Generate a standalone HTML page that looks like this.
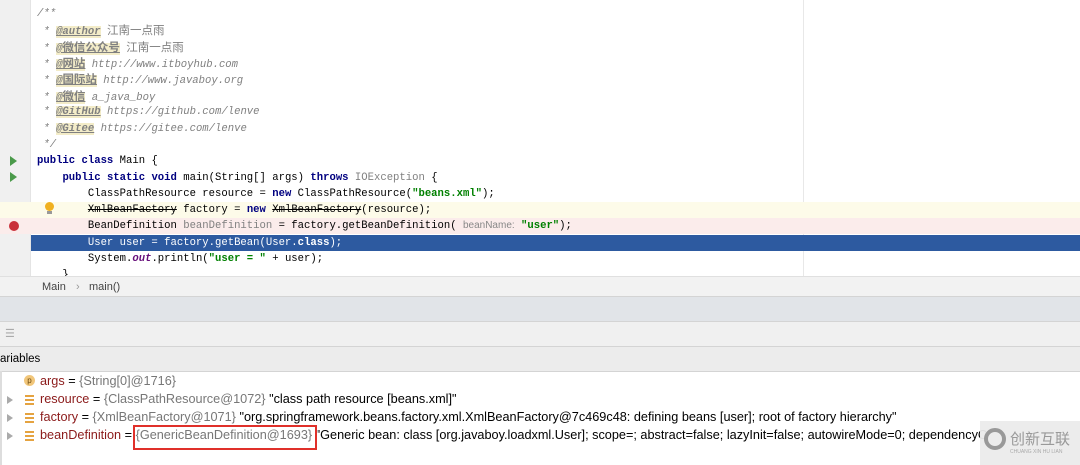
<!DOCTYPE html><html><head><meta charset="utf-8"><style>
body{margin:0;width:1080px;height:465px;overflow:hidden;background:#fff;position:relative;font-family:"Liberation Sans","Noto Sans CJK SC",sans-serif}
.code{position:absolute;left:0;top:0;width:1080px;height:276px;background:#fff;overflow:hidden}
.gut{position:absolute;left:0;top:0;width:30px;height:276px;background:#f0f0f0;border-right:1px solid #e4e4e4}
.ln{position:absolute;left:0;width:1080px;height:16.4px;font-family:"Liberation Mono","Noto Sans CJK SC",monospace;font-size:10.6px;line-height:16.4px;white-space:pre;color:#000}
.ln span.t{position:absolute;left:37px}
.c{color:#808080;font-style:italic}.tag{color:#808080;font-weight:bold;font-style:italic;text-decoration:underline;background:#f3ecc8}
.cj{font-family:"Noto Sans CJK SC",sans-serif;font-size:11.5px;font-style:normal}
.k{color:#000080;font-weight:bold}.s{color:#008000;font-weight:bold}.g{color:#808080}
.hint{font-family:"Liberation Sans",sans-serif;font-size:10px;color:#888}
.rm{position:absolute;left:803px;top:0;width:1px;height:276px;background:#e8e8e8}
.bar{position:absolute;left:0;width:1080px}
.v{position:absolute;left:0;font-size:12.7px;white-space:pre;color:#000}
.n{color:#8b1a1a}.gr{color:#777}
.arr{position:absolute;left:7px;width:0;height:0;border-left:6px solid #aaa;border-top:4px solid transparent;border-bottom:4px solid transparent}
.ic{position:absolute;left:25px;width:9px;height:10px;background:repeating-linear-gradient(#e5a340 0 2px,transparent 2px 4px)}
</style></head><body>
<div class="code">
<div class="gut"></div><div class="rm"></div>
<div class="ln" style="top:202px;background:#fdfbe9"></div>
<div class="ln" style="top:218px;background:#fbeceb"></div>
<div class="ln" style="top:234.5px;left:31px;width:1049px;background:#2d5aa0"></div>
<div class="ln" style="top:6px"><span class="t c">/**</span></div>
<div class="ln" style="top:22px"><span class="t c"> * <span class="tag">@author</span> <span class="cj">江南一点雨</span></span></div>
<div class="ln" style="top:38.5px"><span class="t c"> * <span class="tag">@<span class="cj">微信公众号</span></span> <span class="cj">江南一点雨</span></span></div>
<div class="ln" style="top:55px"><span class="t c"> * <span class="tag">@<span class="cj">网站</span></span> http://www.itboyhub.com</span></div>
<div class="ln" style="top:71px"><span class="t c"> * <span class="tag">@<span class="cj">国际站</span></span> http://www.javaboy.org</span></div>
<div class="ln" style="top:88px"><span class="t c"> * <span class="tag">@<span class="cj">微信</span></span> a_java_boy</span></div>
<div class="ln" style="top:104px"><span class="t c"> * <span class="tag">@GitHub</span> https://github.com/lenve</span></div>
<div class="ln" style="top:120.5px"><span class="t c"> * <span class="tag">@Gitee</span> https://gitee.com/lenve</span></div>
<div class="ln" style="top:137px"><span class="t c"> */</span></div>
<div class="ln" style="top:153px"><span class="t"><span class="k">public class</span> Main {</span></div>
<div class="ln" style="top:169.5px"><span class="t">    <span class="k">public static void</span> main(String[] args) <span class="k">throws</span> <span class="g">IOException</span> {</span></div>
<div class="ln" style="top:186px"><span class="t">        ClassPathResource resource = <span class="k">new</span> ClassPathResource(<span class="s">"beans.xml"</span>);</span></div>
<div class="ln" style="top:202px"><span class="t">        <s>XmlBeanFactory</s> factory = <span class="k">new</span> <s>XmlBeanFactory</s>(resource);</span></div>
<div class="ln" style="top:218px"><span class="t">        BeanDefinition <span class="g">beanDefinition</span> = factory.getBeanDefinition( <span class="hint">beanName:</span> <span class="s">"user"</span>);</span></div>
<div class="ln" style="top:234.5px;color:#fff"><span class="t">        User user = factory.getBean(User.<b>class</b>);</span></div>
<div class="ln" style="top:251px"><span class="t">        System.<i style="color:#660e7a;font-weight:bold">out</i>.println(<span class="s">"user = "</span> + user);</span></div>
<div class="ln" style="top:267px"><span class="t">    }</span></div>
<div style="position:absolute;left:10px;top:156px;border-left:7px solid #4a9a4a;border-top:5px solid transparent;border-bottom:5px solid transparent"></div>
<div style="position:absolute;left:10px;top:172px;border-left:7px solid #4a9a4a;border-top:5px solid transparent;border-bottom:5px solid transparent"></div>
<div style="position:absolute;left:45px;top:202px;width:9px;height:9px;border-radius:50%;background:#f0b020"></div>
<div style="position:absolute;left:47px;top:211px;width:5px;height:3px;background:#999"></div>
<div style="position:absolute;left:9px;top:221px;width:10px;height:10px;border-radius:50%;background:#c9303a"></div>
</div>
<div class="bar" style="top:276px;height:20px;background:#f2f2f2;border-top:1px solid #e0e0e0;font-size:11px;color:#444;line-height:20px"><span style="position:absolute;left:42px">Main</span><span style="position:absolute;left:76px;color:#999">›</span><span style="position:absolute;left:89px">main()</span></div>
<div class="bar" style="top:296px;height:24px;background:#e1e4e8;border-top:1px solid #d4d4d4"></div>
<div class="bar" style="top:321px;height:24px;background:#f0f0f0;border-top:1px solid #d4d4d4;color:#aaa;font-size:11px;line-height:24px"><span style="position:absolute;left:5px">☰</span></div>
<div class="bar" style="top:346px;height:24px;background:#ececec;border-top:1px solid #d4d4d4;border-bottom:1px solid #d4d4d4;font-size:11.5px;line-height:24px"><span style="position:absolute;left:0">ariables</span></div>
<div style="position:absolute;left:0;top:371px;width:2px;height:94px;background:#ddd"></div>
<div style="position:absolute;left:24px;top:375px;width:11px;height:11px;border-radius:50%;background:#f1c67a;font-size:8px;text-align:center;line-height:11px;color:#6b4a10">p</div>
<div class="v" style="left:40px;top:374px"><span class="n">args</span> = <span class="gr">{String[0]@1716}</span></div>
<div class="arr" style="top:396px"></div><div class="ic" style="top:395px"></div>
<div class="v" style="left:40px;top:392px"><span class="n">resource</span> = <span class="gr">{ClassPathResource@1072}</span> "class path resource [beans.xml]"</div>
<div class="arr" style="top:414px"></div><div class="ic" style="top:413px"></div>
<div class="v" style="left:40px;top:410px"><span class="n">factory</span> = <span class="gr">{XmlBeanFactory@1071}</span> "org.springframework.beans.factory.xml.XmlBeanFactory@7c469c48: defining beans [user]; root of factory hierarchy"</div>
<div class="arr" style="top:432px"></div><div class="ic" style="top:431px"></div>
<div class="v" style="left:40px;top:428px"><span class="n">beanDefinition</span> = <span class="gr">{GenericBeanDefinition@1693}</span> "Generic bean: class [org.javaboy.loadxml.User]; scope=; abstract=false; lazyInit=false; autowireMode=0; dependencyC</div>
<div style="position:absolute;left:133px;top:425px;width:180px;height:21px;border:2px solid #e0302a"></div>
<div style="position:absolute;left:980px;top:421px;width:100px;height:44px;background:rgba(235,235,235,.95)"></div>
<div style="position:absolute;left:984px;top:428px;width:22px;height:22px;border-radius:50%;border:4px solid #999;box-sizing:border-box"></div>
<div style="position:absolute;left:1010px;top:428px;font-size:15px;color:#999;font-family:'Noto Sans CJK SC',sans-serif">创新互联</div>
<div style="position:absolute;left:1010px;top:449px;font-size:5px;color:#aaa">CHUANG XIN HU LIAN</div>
</body></html>
